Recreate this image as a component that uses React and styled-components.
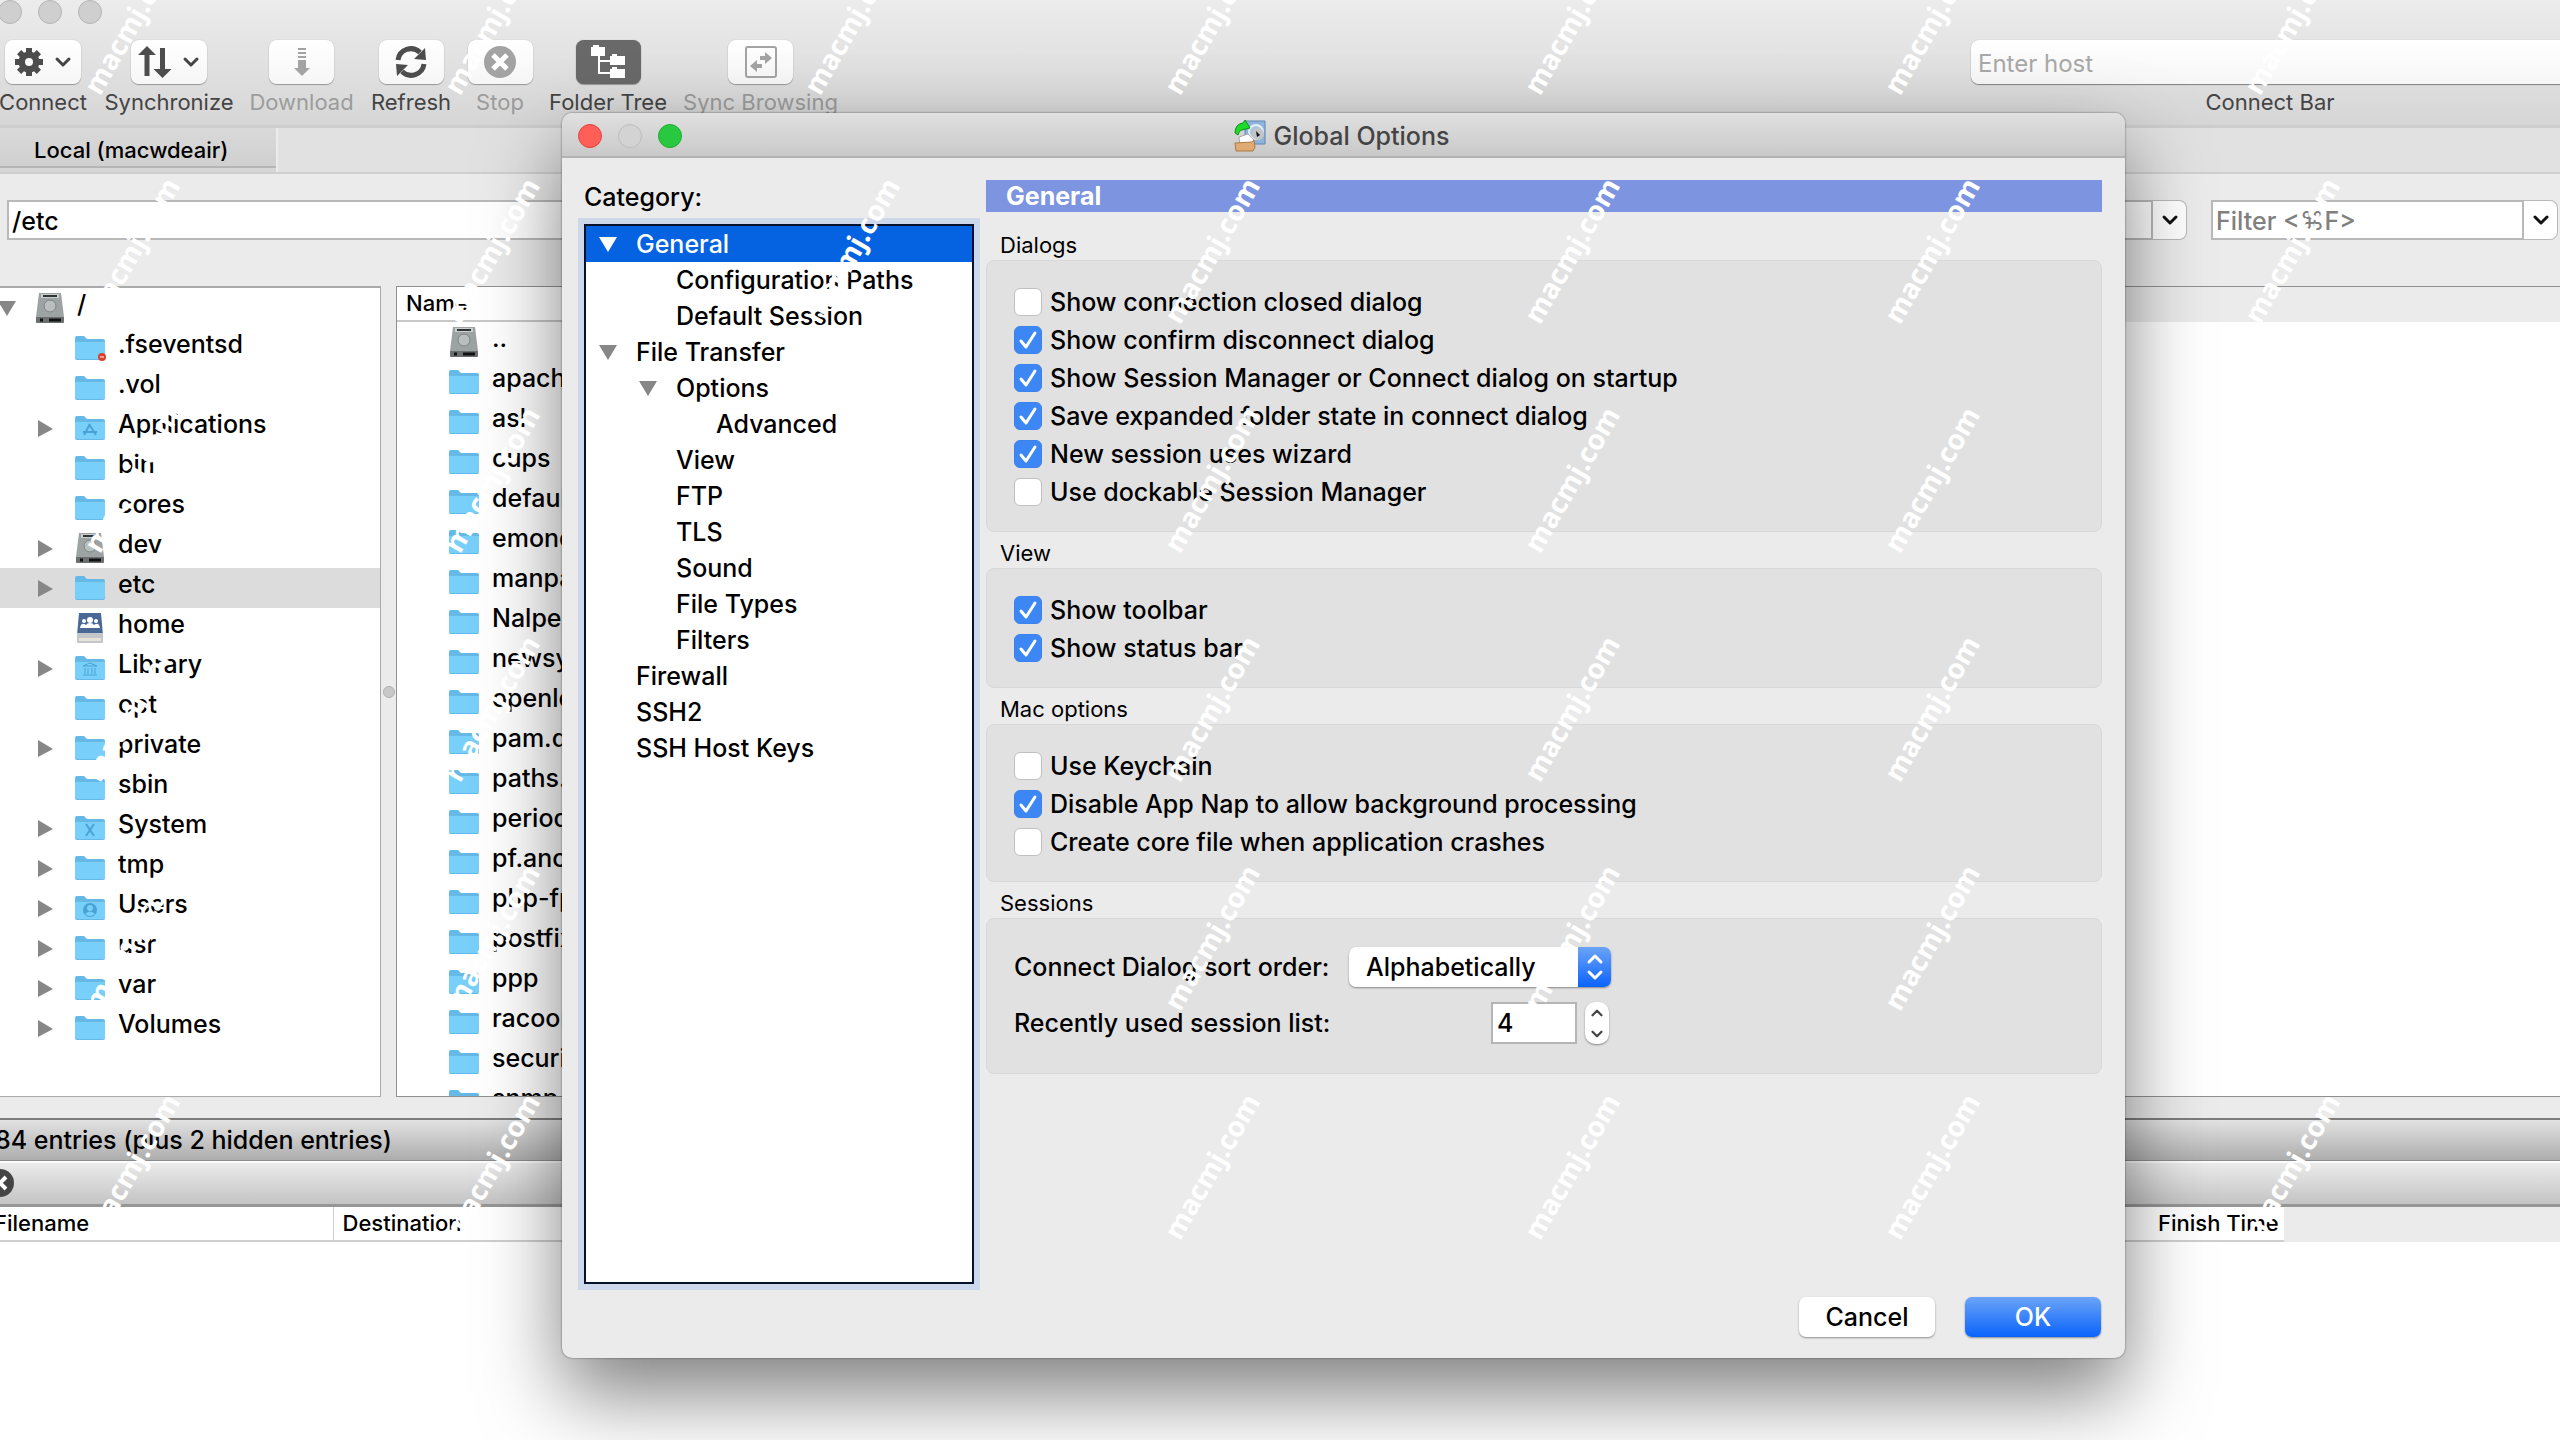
import { useState } from 'react'
import styled, { createGlobalStyle } from 'styled-components'

const toolbarItems = [
  { id: 'connect', label: 'Connect', width: 106, wide: true },
  { id: 'sync', label: 'Synchronize', width: 146, wide: true },
  { id: 'download', label: 'Download', width: 119, disabled: true },
  { id: 'refresh', label: 'Refresh', width: 100 },
  { id: 'stop', label: 'Stop', width: 78, disabled: true },
  { id: 'tree', label: 'Folder Tree', width: 138, active: true },
  { id: 'browse', label: 'Sync Browsing', width: 167, disabled: true }
]

const folders = [
  { name: '.fseventsd', icon: 'folder', badge: 'denied' },
  { name: '.vol', icon: 'folder' },
  { name: 'Applications', icon: 'folder', badge: 'apps', open: true },
  { name: 'bin', icon: 'folder' },
  { name: 'cores', icon: 'folder' },
  { name: 'dev', icon: 'disk', open: true },
  { name: 'etc', icon: 'folder', open: true, selected: true },
  { name: 'home', icon: 'home' },
  { name: 'Library', icon: 'folder', badge: 'library', open: true },
  { name: 'opt', icon: 'folder' },
  { name: 'private', icon: 'folder', open: true },
  { name: 'sbin', icon: 'folder' },
  { name: 'System', icon: 'folder', badge: 'system', open: true },
  { name: 'tmp', icon: 'folder', open: true },
  { name: 'Users', icon: 'folder', badge: 'users', open: true },
  { name: 'usr', icon: 'folder', open: true },
  { name: 'var', icon: 'folder', open: true },
  { name: 'Volumes', icon: 'folder', open: true }
]

const files = ['apache2', 'asl', 'cups', 'defaults', 'emond.d', 'manpaths.d', 'Nalpeiron', 'newsyslog.d', 'openldap', 'pam.d', 'paths.d', 'periodic', 'pf.anchors', 'php-fpm.d', 'postfix', 'ppp', 'racoon', 'security', 'snmp']

const categories = [
  { name: 'General', level: 0, open: true, selected: true },
  { name: 'Configuration Paths', level: 1 },
  { name: 'Default Session', level: 1 },
  { name: 'File Transfer', level: 0, open: true },
  { name: 'Options', level: 1, open: true },
  { name: 'Advanced', level: 2 },
  { name: 'View', level: 1 },
  { name: 'FTP', level: 1 },
  { name: 'TLS', level: 1 },
  { name: 'Sound', level: 1 },
  { name: 'File Types', level: 1 },
  { name: 'Filters', level: 1 },
  { name: 'Firewall', level: 0 },
  { name: 'SSH2', level: 0 },
  { name: 'SSH Host Keys', level: 0 }
]

const groups = [
  {
    title: 'Dialogs',
    options: [
      ['Show connection closed dialog', false],
      ['Show confirm disconnect dialog', true],
      ['Show Session Manager or Connect dialog on startup', true],
      ['Save expanded folder state in connect dialog', true],
      ['New session uses wizard', true],
      ['Use dockable Session Manager', false]
    ]
  },
  {
    title: 'View',
    options: [
      ['Show toolbar', true],
      ['Show status bar', true]
    ]
  },
  {
    title: 'Mac options',
    options: [
      ['Use Keychain', false],
      ['Disable App Nap to allow background processing', true],
      ['Create core file when application crashes', false]
    ]
  }
]

/* ---------- icons ---------- */

const Chevron = ({ size = 16, color = '#444', width = 3, up }) => (
  <svg width={size} height={size} viewBox="0 0 16 16" fill="none" stroke={color} strokeWidth={width} strokeLinecap="round" strokeLinejoin="round">
    <path d={up ? 'M2 11l6-6 6 6' : 'M2 5l6 6 6-6'} />
  </svg>
)

const Triangle = ({ down, color = '#878787' }) => (
  <svg width="18" height="18" viewBox="0 0 18 18">
    <path d={down ? 'M0 2h18L9 17z' : 'M1 1v17l15-8z'} fill={color} />
  </svg>
)

const ToolIcon = ({ id }) => {
  if (id === 'connect') {
    return (
      <svg width="28" height="28" viewBox="-14 -14 28 28" fill="#4d4d4d">
        {[0, 45, 90, 135].map((a) => <rect key={a} x="-3" y="-14" width="6" height="28" transform={`rotate(${a})`} />)}
        <circle r="7" fill="none" stroke="#4d4d4d" strokeWidth="7" />
        <circle r="4" fill="#fafafa" />
      </svg>
    )
  }
  if (id === 'sync') {
    return (
      <svg width="32" height="32" viewBox="0 0 32 32" fill="#4d4d4d">
        <path d="M8 0l9 9h-6.500v21h-5V9H-1z" />
        <path d="M23.500 32l9-9H26V2h-5v21h-6.500z" />
      </svg>
    )
  }
  if (id === 'download') {
    return (
      <svg width="16" height="28" viewBox="0 0 16 28" fill="#a3a3a3">
        <path d="M4 0h8v2H4zM4 4h8v2H4zM4 8h8v2H4zM4 12h8v8h4l-8 8-8-8h4z" />
      </svg>
    )
  }
  if (id === 'refresh') {
    return (
      <svg width="32" height="32" viewBox="0 0 32 32">
        <path d="M3 14A13 13 0 0 1 25 6.500" fill="none" stroke="#4d4d4d" strokeWidth="5" />
        <path d="M29 18A13 13 0 0 1 7 25.500" fill="none" stroke="#4d4d4d" strokeWidth="5" />
        <path d="M30 2l1 12-12-1zM2 30L1 18l12 1z" fill="#4d4d4d" />
      </svg>
    )
  }
  if (id === 'stop') {
    return (
      <svg width="32" height="32" viewBox="0 0 32 32">
        <circle cx="16" cy="16" r="16" fill="#a3a3a3" />
        <path d="M9 9l14 14M23 9L9 23" stroke="#fff" strokeWidth="5" />
      </svg>
    )
  }
  if (id === 'tree') {
    return (
      <svg width="34" height="34" viewBox="0 0 34 34" fill="#fff">
        <path d="M0 2h2V0h6v2h6v9H0zM19 11h2V9h5v2h8v9H19zM19 24h2v-2h5v2h8v9H19z" />
        <path d="M8 10v18h12M8 16h12" fill="none" stroke="#fff" strokeWidth="2" />
      </svg>
    )
  }
  return (
    <svg width="32" height="32" viewBox="0 0 32 32">
      <rect x="1" y="1" width="30" height="30" rx="2" fill="none" stroke="#a3a3a3" strokeWidth="2" />
      <path d="M20 6l7 6-7 6v-4h-5v-4h5zM12 14l-7 6 7 6v-4h5v-4h-5z" fill="#a3a3a3" />
    </svg>
  )
}

const FolderIcon = ({ badge }) => (
  <svg width="30" height="26" viewBox="0 0 30 26">
    <path d="M0 3q0-2 2-2h7l3 3h16q2 0 2 2v17q0 2-2 2H2q-2 0-2-2z" fill="#64b9e6" />
    <path d="M0 7h30v15q0 2-2 2H2q-2 0-2-2z" fill="#78cffa" />
    {badge === 'apps' && <path d="M15 9L9 20M14 9l7 11M8 17h14" stroke="#48a3d4" strokeWidth="2" fill="none" />}
    {badge === 'system' && <path d="M11 9l8 12M19 9l-8 12" stroke="#48a3d4" strokeWidth="2" />}
    {badge === 'library' && <path d="M8 11h14l-7-3zM10 13v6M13 13v6M17 13v6M20 13v6M8 20h14" stroke="#48a3d4" strokeWidth="1" fill="none" />}
    {badge === 'users' && (
      <g fill="#48a3d4">
        <circle cx="15" cy="15" r="7" />
        <circle cx="15" cy="13" r="3" fill="#78cffa" />
        <path d="M10 19q5-5 10 0-5 4-10 0z" fill="#78cffa" />
      </g>
    )}
    {badge === 'denied' && (
      <g>
        <circle cx="27" cy="22" r="4" fill="#d8432b" />
        <path d="M25 22h4" stroke="#fff" strokeWidth="1" />
      </g>
    )}
  </svg>
)

const DiskIcon = () => (
  <svg width="28" height="30" viewBox="0 0 28 30">
    <path d="M3 0h22l3 24H0z" fill="#9da2a3" />
    <path d="M5 1h18v4H5z" fill="#c9d0d0" />
    <path d="M7 2h14v2H7z" fill="#333" />
    <circle cx="14" cy="13" r="6" fill="#b9bebf" stroke="#7f8586" />
    <path d="M0 24h28v5q0 1-1 1H1q-1 0-1-1z" fill="#6b6f70" />
    <path d="M4 27h3M13 27h12" stroke="#111" strokeWidth="3" />
  </svg>
)

const HomeIcon = () => (
  <svg width="26" height="30" viewBox="0 0 26 30">
    <path d="M2 0h22l2 22H0z" fill="#4a6896" />
    <path d="M0 20h26v9q0 1-1 1H1q-1 0-1-1z" fill="#c3c6ca" />
    <path d="M2 25h22v3H2z" fill="#e6e3d8" />
    <g fill="#fff">
      <circle cx="7" cy="8" r="2" /><circle cx="13" cy="7" r="3" /><circle cx="19" cy="8" r="2" />
      <path d="M3 15q1-5 4-4 1 0 2 1 1-2 4-2t4 2q1-1 2-1 3-1 4 4z" />
    </g>
  </svg>
)

const OptionsIcon = () => (
  <svg width="32" height="32" viewBox="0 0 32 32">
    <path d="M11 1h20v23H11z" fill="#8fb4dc" stroke="#5d86b5" />
    <circle cx="22" cy="12" r="7" fill="#a9c4e0" stroke="#e8eef5" strokeWidth="2" />
    <circle cx="24" cy="14" r="6" fill="#c2c5c8" />
    <path d="M22 11l4 4-3 2z" fill="#111" />
    <path d="M1 13q0-9 8-10l2-3 5 8-8 2q-3 0-4 5z" fill="#1ddb2b" stroke="#138c1c" />
    <path d="M5 17l9-3 6 6-3 5-11 1z" fill="#fff" stroke="#aaa" />
    <path d="M1 23l17-1 2-2 1 7-2 4H2z" fill="#e0ab72" stroke="#a97a45" />
  </svg>
)

const fileIcon = (item) => {
  if (item.icon === 'disk') return <DiskIcon />
  if (item.icon === 'home') return <HomeIcon />
  return <FolderIcon badge={item.badge} />
}

/* ---------- page ---------- */

export default function App() {
  const [order, setOrder] = useState('Alphabetically')

  return (
    <Desktop>
      <GlobalStyle />

      <Toolbar>
        <Lights>
          <Light $color="#cfcfcf" $border="#b4b4b4" aria-label="Close window" />
          <Light $color="#cfcfcf" $border="#b4b4b4" aria-label="Minimize window" />
          <Light $color="#cfcfcf" $border="#b4b4b4" aria-label="Zoom window" />
        </Lights>
        <ToolRow>
          <ToolGroup>
            {toolbarItems.map((t) => (
              <Tool key={t.id} $width={t.width} $disabled={t.disabled}>
                <ToolButton id={t.id} $wide={t.wide} $active={t.active} disabled={t.disabled}>
                  <ToolIcon id={t.id} />
                  {t.wide && <Chevron />}
                </ToolButton>
                <label htmlFor={t.id}>{t.label}</label>
              </Tool>
            ))}
          </ToolGroup>
          <ConnectBar>
            <input id="host" placeholder="Enter host" />
            <label htmlFor="host">Connect Bar</label>
          </ConnectBar>
        </ToolRow>
      </Toolbar>

      <TabBar>
        <Tab>Local (macwdeair)</Tab>
      </TabBar>

      <PathBar>
        <Combo $grow>
          <input aria-label="Path" defaultValue="/etc" />
          <button aria-label="Recent paths"><Chevron color="#111" /></button>
        </Combo>
        <Combo>
          <input aria-label="Filter" placeholder="Filter <⌘F>" />
          <button aria-label="Recent filters"><Chevron color="#111" /></button>
        </Combo>
      </PathBar>

      <Browser>
        <FolderTree>
          <FolderRow $root>
            <Triangle down />
            <IconCell><DiskIcon /></IconCell>
            <span>/</span>
          </FolderRow>
          {folders.map((f) => (
            <FolderRow key={f.name} $selected={f.selected}>
              <Twisty>{f.open && <Triangle />}</Twisty>
              <IconCell>{fileIcon(f)}</IconCell>
              <span>{f.name}</span>
            </FolderRow>
          ))}
        </FolderTree>
        <Splitter><i /></Splitter>
        <FilePane>
          <FileTable>
            <thead>
              <tr><th>Name</th></tr>
            </thead>
            <tbody>
              <tr><td><FileCell><IconCell><DiskIcon /></IconCell><span>..</span></FileCell></td></tr>
              {files.map((f) => (
                <tr key={f}><td><FileCell><IconCell><FolderIcon /></IconCell><span>{f}</span></FileCell></td></tr>
              ))}
            </tbody>
          </FileTable>
        </FilePane>
      </Browser>

      <StatusBar>84 entries (plus 2 hidden entries)</StatusBar>
      <QueueBar>
        <button aria-label="Cancel transfer">
          <svg width="28" height="28" viewBox="0 0 28 28">
            <circle cx="14" cy="14" r="14" fill="#444" />
            <path d="M8 8l12 12M20 8L8 20" stroke="#fff" strokeWidth="4" />
          </svg>
        </button>
      </QueueBar>
      <Queue>
        <QueueTable>
          <thead>
            <tr>
              <th>Filename</th>
              <th>Destination</th>
              <th>Finish Time</th>
            </tr>
          </thead>
        </QueueTable>
      </Queue>

      <Dialog role="dialog" aria-labelledby="dialog-title">
        <TitleBar>
          <Lights>
            <Light $color="#ff5f57" $border="#e0443e" aria-label="Close" />
            <Light $color="#d3d3d3" $border="#bdbdbd" aria-label="Minimize" />
            <Light $color="#28c940" $border="#1dad2b" aria-label="Zoom" />
          </Lights>
          <h1 id="dialog-title"><OptionsIcon />Global Options</h1>
        </TitleBar>

        <DialogBody>
          <CategoryColumn>
            <h2 id="category">Category:</h2>
            <CategoryList aria-labelledby="category">
              {categories.map((c) => (
                <CategoryRow key={c.name} $level={c.level} $selected={c.selected}>
                  <Twisty>{c.open && <Triangle down color={c.selected ? '#fff' : '#878787'} />}</Twisty>
                  {c.name}
                </CategoryRow>
              ))}
            </CategoryList>
          </CategoryColumn>

          <Settings>
            <SettingsTitle>General</SettingsTitle>
            {groups.map((g) => (
              <Group key={g.title}>
                <legend>{g.title}</legend>
                <GroupBox>
                  {g.options.map(([text, on]) => (
                    <CheckRow key={text}>
                      <Check>
                        <input type="checkbox" defaultChecked={on} />
                        <svg viewBox="0 0 28 28" fill="none" stroke="#fff" strokeWidth="3" strokeLinecap="round" strokeLinejoin="round">
                          <path d="M7 15l5 6 9-14" />
                        </svg>
                      </Check>
                      {text}
                    </CheckRow>
                  ))}
                </GroupBox>
              </Group>
            ))}
            <Group>
              <legend>Sessions</legend>
              <GroupBox $form>
                <FieldRow>
                  <label htmlFor="order">Connect Dialog sort order:</label>
                  <PopUp>
                    <select id="order" value={order} onChange={(e) => setOrder(e.target.value)}>
                      <option>Alphabetically</option>
                      <option>Most recent</option>
                    </select>
                    <span>
                      <Chevron up color="#fff" />
                      <Chevron color="#fff" />
                    </span>
                  </PopUp>
                </FieldRow>
                <FieldRow>
                  <label htmlFor="recent">Recently used session list:</label>
                  <Spin>
                    <input id="recent" defaultValue="4" />
                    <div>
                      <button aria-label="Increase"><Chevron up size={12} /></button>
                      <button aria-label="Decrease"><Chevron size={12} /></button>
                    </div>
                  </Spin>
                </FieldRow>
              </GroupBox>
            </Group>
          </Settings>
        </DialogBody>

        <Footer>
          <PushButton>Cancel</PushButton>
          <PushButton $primary>OK</PushButton>
        </Footer>
      </Dialog>

      <Watermarks aria-hidden="true">
        {Array.from({ length: 42 }, (_, i) => <div key={i}><span>macmj.com</span></div>)}
      </Watermarks>
    </Desktop>
  )
}

/* ---------- styles ---------- */

const GlobalStyle = createGlobalStyle`
  * {
    box-sizing: border-box;
  }
  body {
    margin: 0;
    background: #fff;
  }
  body, button, input, select {
    font-family: Inter, "DejaVu Sans", sans-serif;
    font-size: 25px;
    font-weight: 450;
    color: #000;
  }
  svg {
    display: block;
    flex: none;
    overflow: visible;
  }
`

const Desktop = styled.div`
  position: relative;
  display: flex;
  flex-direction: column;
  height: 100vh;
  overflow: hidden;
  line-height: 30px;
  white-space: nowrap;
`

const Toolbar = styled.header`
  flex: none;
  height: 128px;
  background: linear-gradient(#ececec, #d6d6d6);
  border-bottom: 3px solid #cdcdcd;
`

const Lights = styled.div`
  display: flex;
  gap: 16px;
  margin-left: -2px;
`

const Light = styled.button`
  width: 24px;
  height: 24px;
  padding: 0;
  border: 1px solid ${(p) => p.$border};
  border-radius: 50%;
  background: ${(p) => p.$color};
`

const ToolRow = styled.div`
  display: flex;
  justify-content: space-between;
  margin-top: 16px;
`

const ToolGroup = styled.div`
  display: flex;
  margin-left: -10px;
`

const Tool = styled.div`
  display: flex;
  flex-direction: column;
  align-items: center;
  gap: 3px;
  width: ${(p) => p.$width}px;
  font-size: 22px;
  font-weight: 400;
  color: ${(p) => (p.$disabled ? '#9c9c9c' : '#444')};
`

const ToolButton = styled.button`
  display: flex;
  align-items: center;
  justify-content: center;
  gap: 12px;
  width: ${(p) => (p.$wide ? 76 : 65)}px;
  height: 44px;
  padding: 0;
  border: 0;
  border-radius: 8px;
  background: ${(p) => (p.$active ? '#696969' : 'linear-gradient(#fff, #f6f6f6)')};
  box-shadow: 0 1px 1px rgba(0, 0, 0, 0.3), 0 0 1px rgba(0, 0, 0, 0.3);
`

const ConnectBar = styled.div`
  display: flex;
  flex-direction: column;
  align-items: center;
  gap: 3px;
  width: 598px;
  margin-right: -9px;
  font-size: 22px;
  font-weight: 400;
  color: #444;

  input {
    width: 100%;
    height: 44px;
    padding: 2px 7px 0;
    border: 0;
    border-radius: 8px;
    background: linear-gradient(#fff, #f6f6f6);
    box-shadow: 0 1px 1px rgba(0, 0, 0, 0.4), 0 0 1px rgba(0, 0, 0, 0.3);
    font-size: 24px;
    font-weight: 400;
  }
  input::placeholder {
    color: #a8a8a8;
  }
`

const TabBar = styled.nav`
  flex: none;
  height: 46px;
  background: #e1e1e1;
  border-bottom: 2px solid #cfcfcf;
`

const Tab = styled.button`
  width: 278px;
  height: 44px;
  padding: 0 0 0 34px;
  border: 0;
  border-right: 2px solid #ebebeb;
  background: linear-gradient(#d9d9d9, #d0d0d0 38px, #b5b5b5 38px, #b5b5b5 40px, #d6d6d6 40px);
  font-size: 22px;
  text-align: left;
`

const PathBar = styled.div`
  display: flex;
  flex: none;
  gap: 24px;
  height: 112px;
  padding: 26px 2px 0 7px;
  background: #ebebeb;
`

const Combo = styled.div`
  display: flex;
  flex: ${(p) => (p.$grow ? '1' : '0 0 347px')};
  min-width: 0;
  height: 40px;

  input {
    flex: 1;
    width: 0;
    min-width: 0;
    padding: 1px 3px 0;
    border: 2px solid #b9b9b9;
    background: #fff;
  }
  input::placeholder {
    color: #808080;
  }
  button {
    display: flex;
    flex: none;
    align-items: center;
    justify-content: center;
    width: 34px;
    padding: 0;
    border: 1px solid #b9b9b9;
    border-left: 0;
    border-radius: 0 8px 8px 0;
    background: #fff;
  }
`

const Browser = styled.main`
  display: flex;
  flex: none;
  height: 832px;
  padding-bottom: 21px;
  background: #ebebeb;
`

const FolderTree = styled.ul`
  width: 381px;
  margin: 0;
  padding: 0;
  list-style: none;
  background: #fff;
  border: solid #aaa;
  border-width: 2px 1px 1px 0;
  overflow: hidden;
`

const FolderRow = styled.li`
  display: flex;
  align-items: center;
  height: 40px;
  margin-left: ${(p) => (p.$root ? '-2px' : '0')};
  padding-left: ${(p) => (p.$root ? '0' : '37px')};
  gap: ${(p) => (p.$root ? '0' : '14px')};
  background: ${(p) => (p.$selected ? '#dcdcdc' : 'transparent')};

  > span:last-child {
    padding-bottom: 8px;
  }
  > span:nth-child(2) {
    margin-left: ${(p) => (p.$root ? '18px' : '5px')};
  }
`

const Twisty = styled.span`
  width: 18px;
`

const IconCell = styled.span`
  display: flex;
  justify-content: center;
  width: 32px;
  margin-right: 11px;

  ${FolderRow} span + & {
    margin-right: -2px;
  }
`

const Splitter = styled.div`
  display: flex;
  align-items: center;
  justify-content: center;
  width: 15px;

  i {
    width: 12px;
    height: 12px;
    border: 1px solid #b0b0b0;
    border-radius: 50%;
    background: #c8c8c8;
  }
`

const FilePane = styled.div`
  flex: 1;
  background: linear-gradient(#ebebeb 35px, #fff 35px);
  border: solid #909090;
  border-width: 1px 0 1px 1px;
  overflow: hidden;
`

const FileTable = styled.table`
  width: 1000px;
  border-collapse: collapse;

  th {
    height: 34px;
    padding: 0 9px 2px;
    background: #fff;
    border-bottom: 2px solid #c8c8c8;
    font-size: 22px;
    font-weight: 450;
    line-height: 30px;
    text-align: left;
  }
  td {
    padding: 0;
  }
`

const FileCell = styled.div`
  display: flex;
  align-items: center;
  height: 40px;
  padding-left: 51px;

  > span:last-child {
    padding-bottom: 8px;
    margin-left: 1px;
  }
`

const StatusBar = styled.footer`
  flex: none;
  height: 43px;
  margin-left: -5px;
  padding-top: 5px;
  background: linear-gradient(#e2e2e2, #adadad);
  border-top: 2px solid #7c7c7c;
  border-bottom: 1px solid #8c8c8c;
`

const QueueBar = styled.div`
  display: flex;
  flex: none;
  align-items: center;
  height: 46px;
  background: linear-gradient(#ebebeb, #c4c4c4);
  border-top: 2px solid #fbfbfb;
  border-bottom: 3px solid #969696;

  button {
    margin-left: -14px;
    padding: 0 0 2px;
    border: 0;
    background: none;
  }
`

const Queue = styled.section`
  flex: 1;
  background: linear-gradient(#ebebeb 35px, #fff 35px);
`

const QueueTable = styled.table`
  width: 2284px;
  table-layout: fixed;
  border-collapse: collapse;
  background: #fff;

  th {
    height: 34px;
    padding: 0 0 2px 9px;
    border-bottom: 2px solid #cfcfcf;
    font-size: 22px;
    font-weight: 450;
    line-height: 30px;
    text-align: left;
  }
  th:first-child {
    width: 333px;
    padding-left: 0;
    border-right: 1px solid #d2d2d2;
    text-indent: -6px;
  }
  th:last-child {
    width: 135px;
  }
`

const Dialog = styled.div`
  position: absolute;
  top: 113px;
  right: 435px;
  bottom: 82px;
  left: 562px;
  display: flex;
  flex-direction: column;
  border-radius: 10px;
  background: #ebebeb;
  box-shadow: 0 0 2px rgba(0, 0, 0, 0.6), 0 36px 80px rgba(0, 0, 0, 0.5);
`

const TitleBar = styled.div`
  display: grid;
  grid-template-columns: 1fr auto 1fr;
  align-items: center;
  height: 45px;
  padding: 3px 22px 0 18px;
  background: linear-gradient(#e0e0e0, #c9c9c9);
  border-bottom: 2px solid #b3b3b3;
  border-radius: 10px 10px 0 0;

  h1 {
    display: flex;
    align-items: center;
    gap: 8px;
    margin: 0;
    font-size: 25px;
    font-weight: 450;
    color: #444;
  }
`

const DialogBody = styled.div`
  display: flex;
  flex: 1;
  gap: 12px;
  min-height: 0;
  padding: 22px 23px 0 22px;
`

const CategoryColumn = styled.div`
  display: flex;
  flex-direction: column;
  flex: 0 0 390px;

  h2 {
    margin: 2px 0 12px;
    font-size: 25px;
    font-weight: 450;
  }
`

const CategoryList = styled.ul`
  flex: 1;
  margin: 0;
  padding: 0;
  list-style: none;
  background: #fff;
  border: 2px solid #06122c;
  outline: 6px solid #cdd8ea;
`

const CategoryRow = styled.li`
  display: flex;
  align-items: center;
  gap: 19px;
  height: 36px;
  padding-left: ${(p) => 13 + p.$level * 40}px;
  background: ${(p) => (p.$selected ? '#0563e1' : 'transparent')};
  color: ${(p) => (p.$selected ? '#fff' : '#000')};
`

const Settings = styled.div`
  flex: 1;
`

const SettingsTitle = styled.h2`
  margin: 0 0 12px;
  padding: 1px 20px;
  background: #7d94e1;
  color: #fff;
  font-size: 25px;
  font-weight: 700;
`

const Group = styled.fieldset`
  margin: 0;
  padding: 6px 0 0;
  border: 0;

  legend {
    float: left;
    width: 100%;
    padding: 0 14px;
    font-size: 22px;
    font-weight: 400;
  }
`

const GroupBox = styled.div`
  clear: both;
  display: flex;
  flex-direction: column;
  gap: ${(p) => (p.$form ? '14px' : '0')};
  padding: ${(p) => (p.$form ? '27px 27px 29px' : '22px 27px 20px')};
  background: #e1e1e1;
  border: 1px solid #d8d8d8;
  border-radius: 8px;
`

const CheckRow = styled.label`
  display: flex;
  align-items: center;
  gap: 8px;
  height: 38px;
`

const Check = styled.span`
  display: grid;
  width: 28px;
  height: 28px;

  > * {
    grid-area: 1 / 1;
  }
  input {
    appearance: none;
    width: 28px;
    height: 28px;
    margin: 0;
    border: 1px solid #c0c0c0;
    border-radius: 6px;
    background: #fff;
  }
  input:checked {
    border-color: #3b82ee;
    background: #3d87f5;
  }
  svg {
    visibility: hidden;
    pointer-events: none;
  }
  input:checked + svg {
    visibility: visible;
  }
`

const FieldRow = styled.div`
  display: flex;
  align-items: center;
  height: 42px;

  label {
    flex: 0 0 335px;
  }
`

const PopUp = styled.div`
  display: grid;
  width: 262px;
  height: 40px;

  > * {
    grid-area: 1 / 1;
  }
  select {
    appearance: none;
    padding: 0 17px 1px;
    border: 0;
    border-radius: 7px;
    background: #fff;
    box-shadow: 0 1px 2px rgba(0, 0, 0, 0.4);
  }
  span {
    display: flex;
    flex-direction: column;
    align-items: center;
    justify-content: center;
    justify-self: end;
    width: 33px;
    border-radius: 0 7px 7px 0;
    background: linear-gradient(#6ba4f8, #0a63fb);
    pointer-events: none;
  }
`

const Spin = styled.div`
  display: flex;
  justify-content: flex-end;
  gap: 8px;
  width: 260px;
  height: 42px;

  input {
    width: 86px;
    padding: 0 4px;
    border: 2px solid #b5b5b5;
    background: #fff;
  }
  div {
    display: flex;
    flex-direction: column;
    width: 24px;
    border-radius: 10px;
    background: #fff;
    box-shadow: 0 1px 2px rgba(0, 0, 0, 0.4);
  }
  button {
    display: flex;
    flex: 1;
    align-items: center;
    justify-content: center;
    padding: 0;
    border: 0;
    background: none;
  }
`

const Footer = styled.div`
  display: flex;
  justify-content: flex-end;
  gap: 30px;
  padding: 13px 24px 21px;
`

const PushButton = styled.button`
  width: 136px;
  height: 40px;
  padding: 0;
  border: 0;
  border-radius: 7px;
  background: ${(p) => (p.$primary ? 'linear-gradient(#6ba4f8, #0a63fb)' : '#fff')};
  color: ${(p) => (p.$primary ? '#fff' : '#000')};
  box-shadow: 0 1px 2px rgba(0, 0, 0, 0.4);
`

const Watermarks = styled.div`
  position: absolute;
  top: -94px;
  left: -49px;
  display: grid;
  grid-template-columns: repeat(7, 360px);
  grid-auto-rows: 229px;
  pointer-events: none;

  div {
    display: flex;
    align-items: center;
    justify-content: center;
  }
  span {
    color: #fff;
    font-family: "Open Sans", sans-serif;
    font-size: 28px;
    font-weight: 700;
    transform: rotate(-60deg);
  }
`
